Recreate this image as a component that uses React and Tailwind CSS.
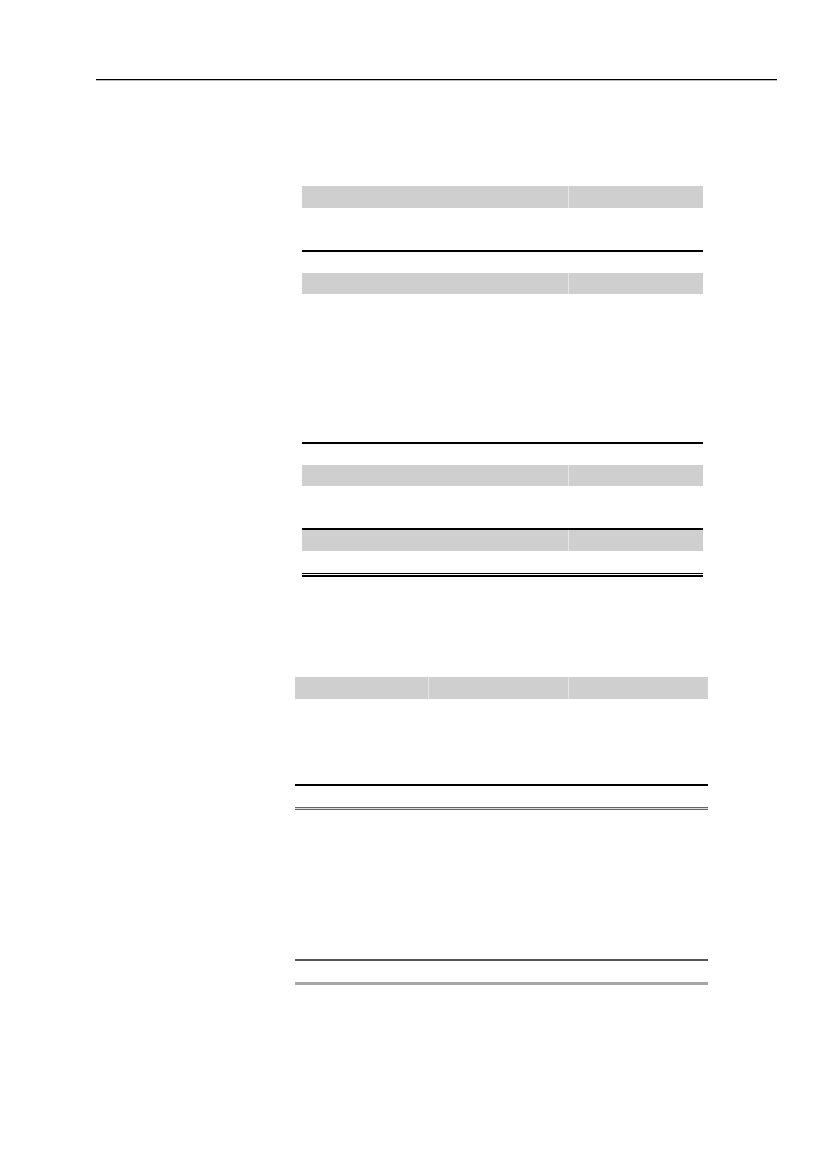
export default function App() {
  const Gray1 = ({ h = "h-[22px]" }) => (
    <div className={`flex ${h}`}>
      <div className="w-[266px] bg-[#d0cfd0]" />
      <div className="w-px bg-[#e6e6e6]" />
      <div className="flex-1 bg-[#d0cfd0]" />
    </div>
  );
  return (
    <div className="w-[827px] h-[1169px] bg-white relative" style={{ fontFamily: '"Liberation Sans", sans-serif' }}>
      <div className="pt-[79px]">
        <div className="ml-[96px] w-[681px] h-px bg-black" />
        <div className="ml-[96px] w-[681px] h-px bg-[#bbbbbb]" />
      </div>

      {/* Table 1 */}
      <div className="ml-[302px] w-[401px] mt-[105px] flex flex-col">
        <Gray1 />
        <div className="h-[42px]" />
        <div className="h-[2px] bg-black" />
        <div className="h-[21px]" />
        <Gray1 h="h-[21px]" />
        <div className="h-[148px]" />
        <div className="h-[2px] bg-black" />
        <div className="h-[21px]" />
        <Gray1 h="h-[21px]" />
        <div className="h-[42px]" />
        <div className="h-[2px] bg-black" />
        <Gray1 h="h-[21px]" />
        <div className="h-[22px]" />
        <div className="h-px bg-black" />
        <div className="h-px" />
        <div className="h-[2px] bg-black" />
      </div>

      {/* Table 2 */}
      <div className="ml-[295px] w-[413px] mt-[100px] flex flex-col">
        <div className="flex h-[22px]">
          <div className="w-[133px] bg-[#d0cfd0]" />
          <div className="w-px bg-[#e6e6e6]" />
          <div className="w-[139px] bg-[#d0cfd0]" />
          <div className="w-px bg-[#e6e6e6]" />
          <div className="flex-1 bg-[#d0cfd0]" />
        </div>
        <div className="h-[85px]" />
        <div className="h-[2px] bg-black" />
        <div className="h-[21px]" />
        <div className="h-px bg-[#666666]" />
        <div className="h-px bg-[#dddddd]" />
        <div className="h-px bg-[#666666]" />
        <div className="h-[149px]" />
        <div className="h-[2px] bg-[#555555]" />
        <div className="h-[21px]" />
        <div className="h-[3px] bg-[#a6a6a6]" />
      </div>
    </div>
  );
}
